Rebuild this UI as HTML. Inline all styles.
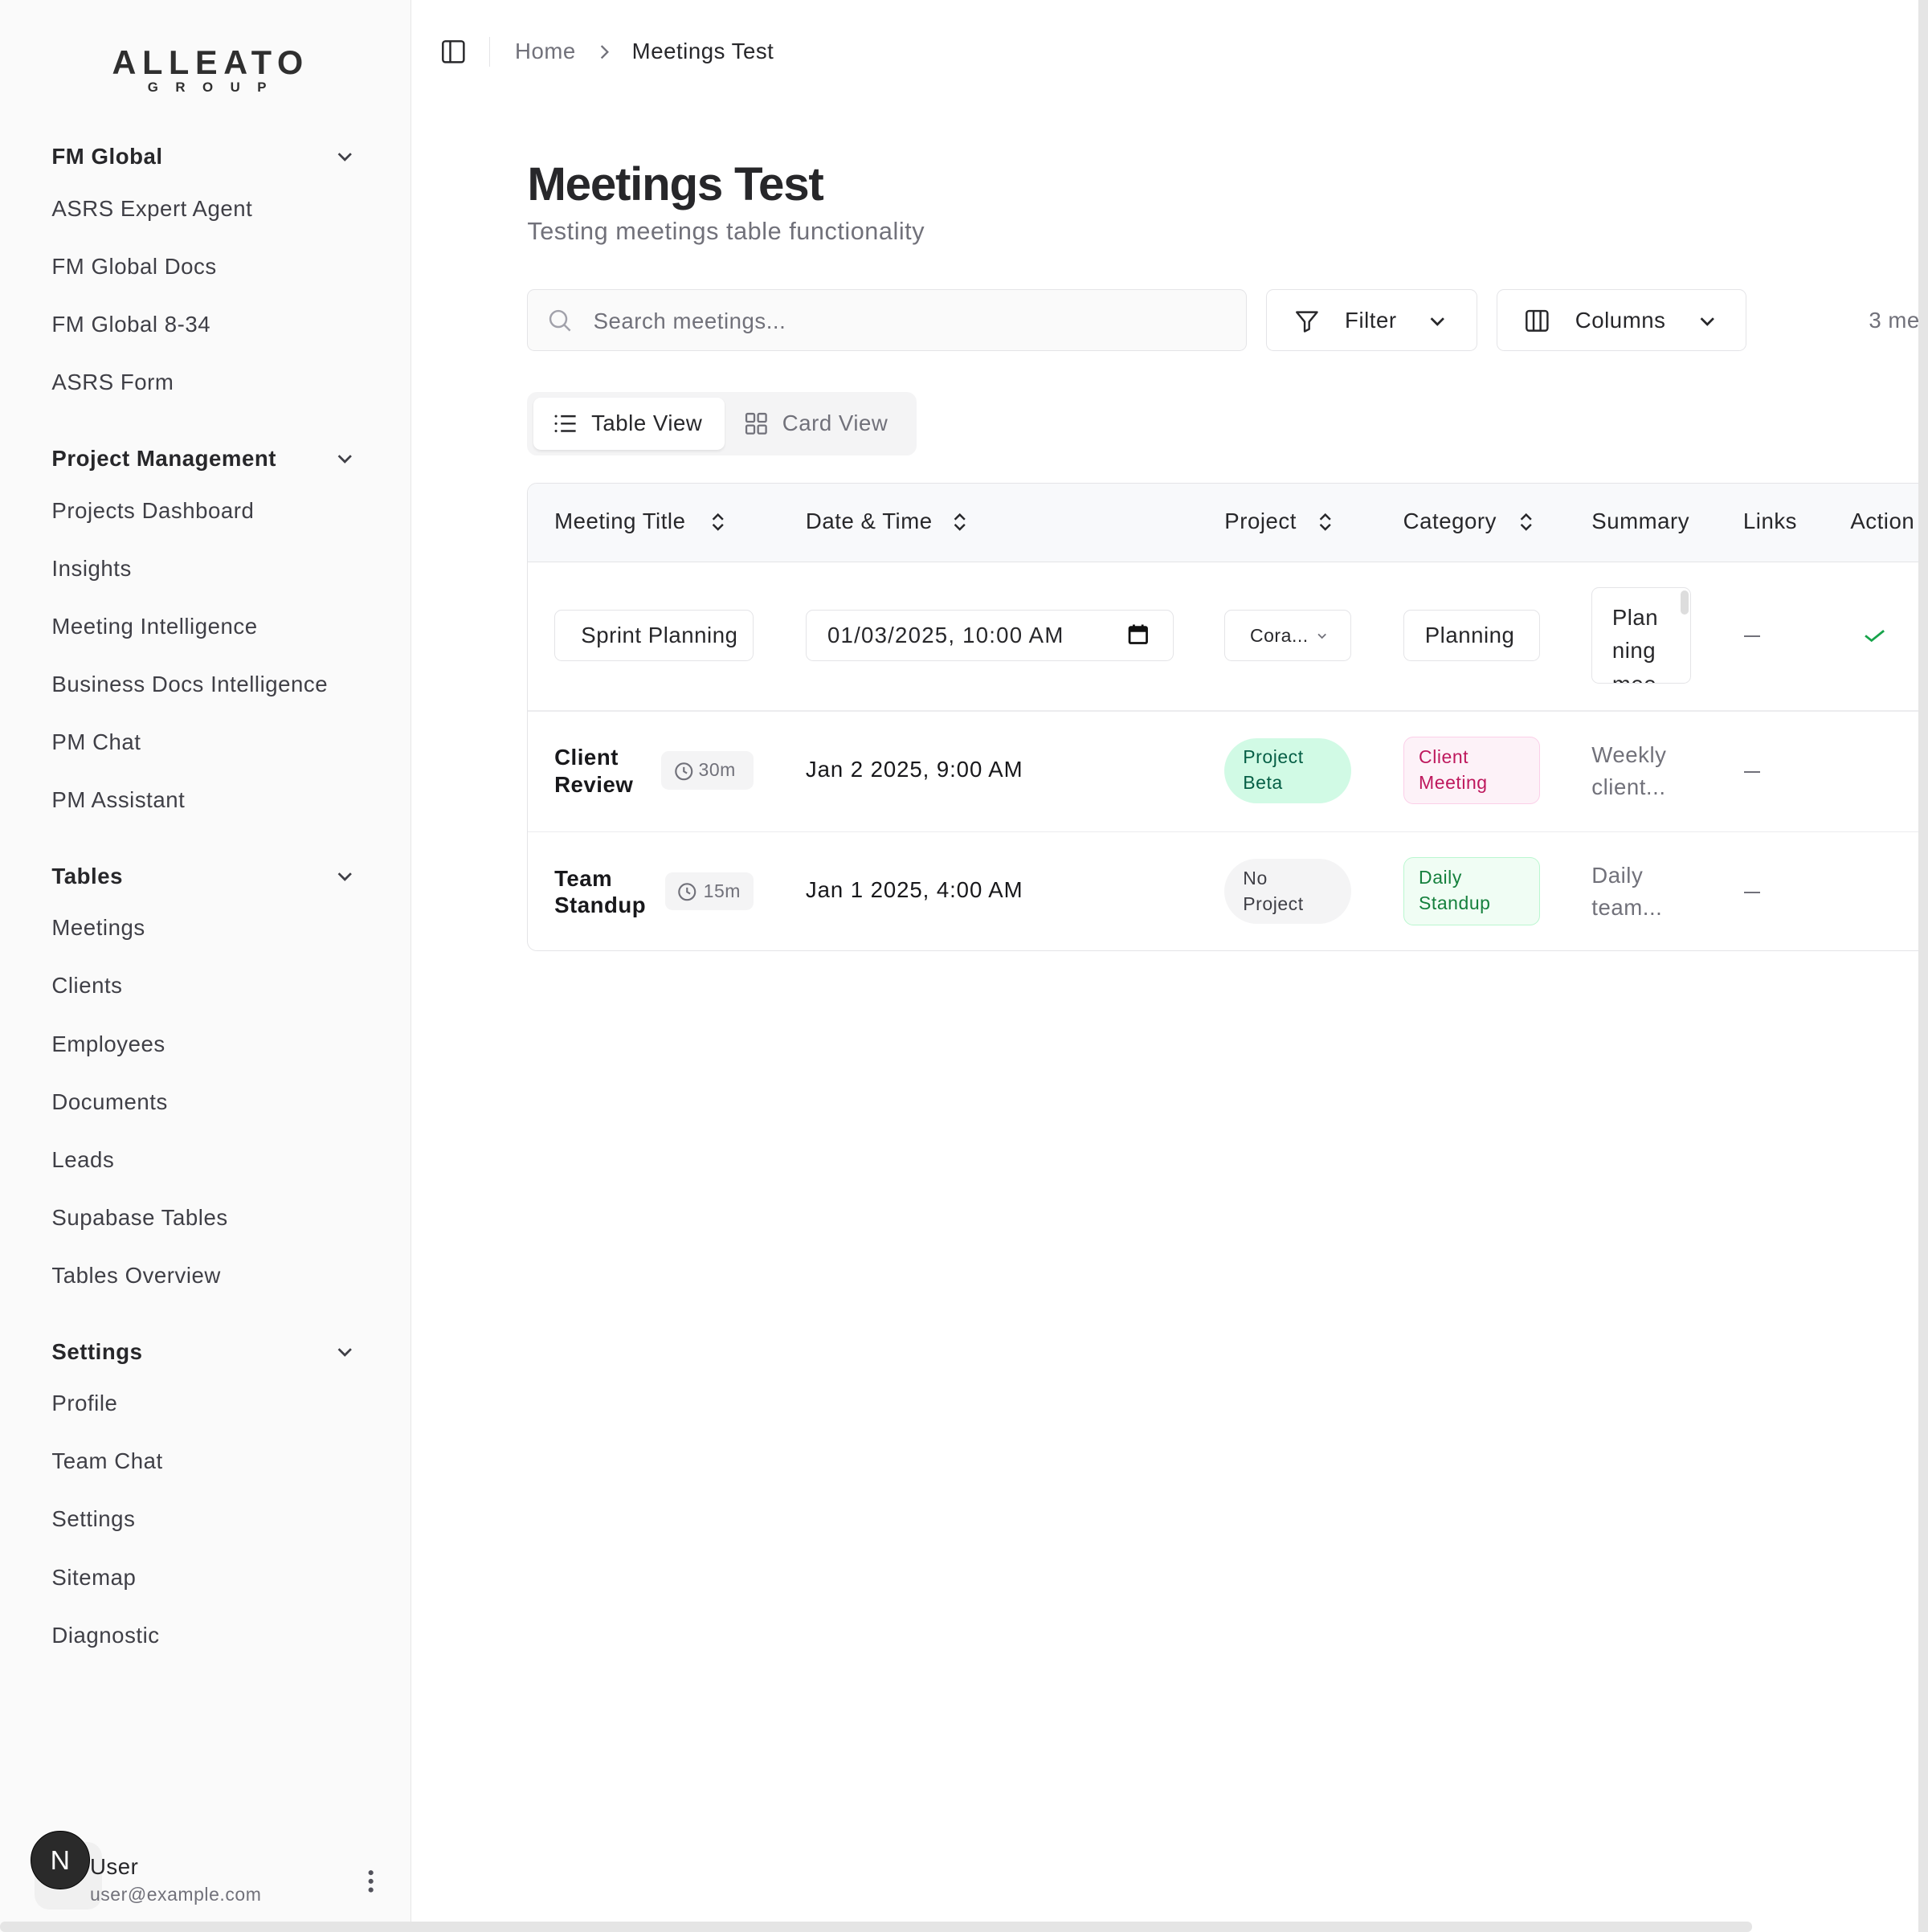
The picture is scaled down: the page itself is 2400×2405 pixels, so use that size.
<!DOCTYPE html>
<html><head><meta charset="utf-8"><style>
html{zoom:1.5335}
body{margin:0;width:1565px;height:1568px;overflow:hidden;position:relative;background:#fff;font-family:"Liberation Sans",sans-serif;color:#18181b;letter-spacing:0.35px}
.sb{position:absolute;left:0;top:0;width:333px;height:1568px;background:#fafafa;border-right:1px solid #e7e7e7}
.logo{position:absolute;left:86px;top:38px;width:164px;text-align:center}
.logo .a{font-size:27px;font-weight:bold;letter-spacing:5px;color:#2f2f2f;line-height:27px;margin-left:5px}
.logo .g{font-size:11px;font-weight:bold;letter-spacing:14px;color:#2f2f2f;margin-left:14px;line-height:12px}
.sec{position:absolute;left:42px;font-size:18px;font-weight:bold;color:#27272a}
.chev{position:absolute;left:272px}
.it{position:absolute;left:42px;font-size:18px;color:#3f3f46}
.abs{position:absolute}
.btn{position:absolute;border:1px solid #e4e4e7;border-radius:6px;background:#fff;height:50px;box-sizing:border-box;font-size:18px}
.th{position:absolute;top:413px;font-size:18px;color:#27272a}
.cell{position:absolute;font-size:18px}
.inp{position:absolute;border:1px solid #e4e4e7;border-radius:6px;height:42px;box-sizing:border-box;font-size:18px;color:#27272a;background:#fff}
.badge{position:absolute;border-radius:8px;font-size:15px;line-height:21px;padding:5px 12px;box-sizing:border-box}
</style></head><body>
<div class="sb">
 <div class="logo"><div class="a">ALLEATO</div><div class="g">GROUP</div></div>
 <div class="sec" style="top:117px">FM Global</div>
 <div class="it" style="top:159px">ASRS Expert Agent</div>
 <div class="it" style="top:206px">FM Global Docs</div>
 <div class="it" style="top:253px">FM Global 8-34</div>
 <div class="it" style="top:300px">ASRS Form</div>
 <div class="sec" style="top:362px">Project Management</div>
 <div class="it" style="top:404px">Projects Dashboard</div>
 <div class="it" style="top:451px">Insights</div>
 <div class="it" style="top:498px">Meeting Intelligence</div>
 <div class="it" style="top:545px">Business Docs Intelligence</div>
 <div class="it" style="top:592px">PM Chat</div>
 <div class="it" style="top:639px">PM Assistant</div>
 <div class="sec" style="top:701px">Tables</div>
 <div class="it" style="top:743px">Meetings</div>
 <div class="it" style="top:790px">Clients</div>
 <div class="it" style="top:837px">Employees</div>
 <div class="it" style="top:884px">Documents</div>
 <div class="it" style="top:931px">Leads</div>
 <div class="it" style="top:978px">Supabase Tables</div>
 <div class="it" style="top:1025px">Tables Overview</div>
 <div class="sec" style="top:1087px">Settings</div>
 <div class="it" style="top:1129px">Profile</div>
 <div class="it" style="top:1176px">Team Chat</div>
 <div class="it" style="top:1223px">Settings</div>
 <div class="it" style="top:1270px">Sitemap</div>
 <div class="it" style="top:1317px">Diagnostic</div>
 <svg class="chev" style="top:119px" width="16" height="16" viewBox="0 0 16 16"><path d="M3 6l5 5 5-5" fill="none" stroke="#3f3f46" stroke-width="1.8"/></svg>
 <svg class="chev" style="top:364px" width="16" height="16" viewBox="0 0 16 16"><path d="M3 6l5 5 5-5" fill="none" stroke="#3f3f46" stroke-width="1.8"/></svg>
 <svg class="chev" style="top:703px" width="16" height="16" viewBox="0 0 16 16"><path d="M3 6l5 5 5-5" fill="none" stroke="#3f3f46" stroke-width="1.8"/></svg>
 <svg class="chev" style="top:1089px" width="16" height="16" viewBox="0 0 16 16"><path d="M3 6l5 5 5-5" fill="none" stroke="#3f3f46" stroke-width="1.8"/></svg>
 <div class="abs" style="left:28px;top:1495px;width:55px;height:55px;border-radius:12px;background:#f0f0f0"></div>
 <div class="abs" style="left:25px;top:1486px;width:48px;height:48px;border-radius:50%;background:#2a2a2a;border:1px solid #000;color:#fff;font-size:22px;text-align:center;line-height:48px;box-sizing:border-box">N</div>
 <div class="abs" style="left:73px;top:1505px;font-size:18px;color:#27272a">User</div>
 <div class="abs" style="left:73px;top:1529px;font-size:15px;color:#71717a">user@example.com</div>
 <svg class="abs" style="left:296px;top:1516px" width="10" height="22"><circle cx="5" cy="4" r="2" fill="#52525b"/><circle cx="5" cy="11" r="2" fill="#52525b"/><circle cx="5" cy="18" r="2" fill="#52525b"/></svg>
</div>

<svg class="abs" style="left:358px;top:32px" width="20" height="20" viewBox="0 0 20 20"><rect x="1.5" y="1.5" width="17" height="17" rx="2" fill="none" stroke="#27272a" stroke-width="1.6"/><path d="M7.5 2v16" stroke="#27272a" stroke-width="1.6"/></svg>
<div class="abs" style="left:397px;top:30px;width:1px;height:24px;background:#e4e4e7"></div>
<div class="abs" style="left:418px;top:31px;font-size:18px;color:#71717a">Home</div>
<svg class="abs" style="left:483px;top:35px" width="14" height="14"><path d="M5 2l5 5-5 5" fill="none" stroke="#71717a" stroke-width="1.5"/></svg>
<div class="abs" style="left:513px;top:31px;font-size:18px;color:#27272a">Meetings Test</div>

<div class="abs" style="left:428px;top:128px;font-size:38px;font-weight:bold;color:#27272a;letter-spacing:-0.8px">Meetings Test</div>
<div class="abs" style="left:428px;top:177px;font-size:20px;color:#71717a">Testing meetings table functionality</div>

<div class="btn" style="left:428px;top:235px;width:584px;background:#fafafa">
 <svg class="abs" style="left:16px;top:15px" width="20" height="20"><circle cx="8.5" cy="8.5" r="6.5" fill="none" stroke="#a1a1aa" stroke-width="1.6"/><path d="M13.5 13.5l4.5 4.5" stroke="#a1a1aa" stroke-width="1.6"/></svg>
 <div class="abs" style="left:53px;top:15px;color:#71717a">Search meetings...</div></div>
<div class="btn" style="left:1028px;top:235px;width:171px">
 <svg class="abs" style="left:21px;top:14px" width="22" height="22" viewBox="0 0 24 24"><path d="M3 4h18l-7 8.5V19l-4 2v-8.5z" fill="none" stroke="#27272a" stroke-width="1.7" stroke-linejoin="round"/></svg>
 <div class="abs" style="left:63px;top:14px;color:#27272a">Filter</div>
 <svg class="abs" style="left:130px;top:17px" width="16" height="16"><path d="M3 6l5 5 5-5" fill="none" stroke="#27272a" stroke-width="1.8"/></svg></div>
<div class="btn" style="left:1215px;top:235px;width:203px">
 <svg class="abs" style="left:22px;top:15px" width="20" height="20"><rect x="1.5" y="2" width="17" height="16" rx="2" fill="none" stroke="#27272a" stroke-width="1.6"/><path d="M7.2 2v16M12.8 2v16" stroke="#27272a" stroke-width="1.6"/></svg>
 <div class="abs" style="left:63px;top:14px;color:#27272a">Columns</div>
 <svg class="abs" style="left:162px;top:17px" width="16" height="16"><path d="M3 6l5 5 5-5" fill="none" stroke="#27272a" stroke-width="1.8"/></svg></div>
<div class="abs" style="left:1517px;top:250px;font-size:18px;color:#71717a;white-space:nowrap">3 meetings</div>

<div class="abs" style="left:428px;top:318px;width:316px;height:52px;border-radius:8px;background:#f4f4f5"></div>
<div class="abs" style="left:433px;top:323px;width:155px;height:42px;border-radius:6px;background:#fff;box-shadow:0 1px 2px rgba(0,0,0,.08)"></div>
<svg class="abs" style="left:449px;top:334px" width="20" height="20"><path d="M6 4h12M6 10h12M6 16h12" stroke="#27272a" stroke-width="1.6"/><circle cx="2" cy="4" r="1" fill="#27272a"/><circle cx="2" cy="10" r="1" fill="#27272a"/><circle cx="2" cy="16" r="1" fill="#27272a"/></svg>
<div class="abs" style="left:480px;top:333px;font-size:18px;color:#27272a">Table View</div>
<svg class="abs" style="left:604px;top:334px" width="20" height="20"><rect x="2" y="2" width="6.5" height="6.5" rx="1" fill="none" stroke="#71717a" stroke-width="1.5"/><rect x="11.5" y="2" width="6.5" height="6.5" rx="1" fill="none" stroke="#71717a" stroke-width="1.5"/><rect x="2" y="11.5" width="6.5" height="6.5" rx="1" fill="none" stroke="#71717a" stroke-width="1.5"/><rect x="11.5" y="11.5" width="6.5" height="6.5" rx="1" fill="none" stroke="#71717a" stroke-width="1.5"/></svg>
<div class="abs" style="left:635px;top:333px;font-size:18px;color:#71717a">Card View</div>

<div class="abs" style="left:428px;top:392px;width:1140px;height:380px;border:1px solid #e4e4e7;border-radius:8px;box-sizing:border-box;overflow:hidden">
 <div style="height:63px;background:#f8f9fb;border-bottom:1px solid #e4e4e7"></div>
 <div class="abs" style="left:0;top:184px;width:100%;height:1px;background:#ececee"></div>
 <div class="abs" style="left:0;top:282px;width:100%;height:1px;background:#ececee"></div>
</div>
<div class="th" style="left:450px">Meeting Title</div>
<div class="th" style="left:654px">Date &amp; Time</div>
<div class="th" style="left:994px">Project</div>
<div class="th" style="left:1139px">Category</div>
<div class="th" style="left:1292px">Summary</div>
<div class="th" style="left:1415px">Links</div>
<div class="th" style="left:1502px">Action</div>
<svg class="abs" style="left:576px;top:415px" width="14" height="18"><path d="M3 7l4-4 4 4M3 11l4 4 4-4" fill="none" stroke="#27272a" stroke-width="1.6"/></svg>
<svg class="abs" style="left:772px;top:415px" width="14" height="18"><path d="M3 7l4-4 4 4M3 11l4 4 4-4" fill="none" stroke="#27272a" stroke-width="1.6"/></svg>
<svg class="abs" style="left:1069px;top:415px" width="14" height="18"><path d="M3 7l4-4 4 4M3 11l4 4 4-4" fill="none" stroke="#27272a" stroke-width="1.6"/></svg>
<svg class="abs" style="left:1232px;top:415px" width="14" height="18"><path d="M3 7l4-4 4 4M3 11l4 4 4-4" fill="none" stroke="#27272a" stroke-width="1.6"/></svg>

<div class="inp" style="left:450px;top:495px;width:162px;padding:10px 0 0 21px"><div style="width:126px;overflow:hidden;white-space:nowrap">Sprint Planning</div></div>
<div class="inp" style="left:654px;top:495px;width:299px;padding:10px 0 0 17px;letter-spacing:.8px">01/03/2025, 10:00 AM</div>
<svg class="abs" style="left:915px;top:506px" width="18" height="18"><rect x="2" y="3" width="14" height="13" rx="1" fill="none" stroke="#111" stroke-width="1.8"/><rect x="2" y="3" width="14" height="4" fill="#111"/><path d="M5.5 1v3M12.5 1v3" stroke="#111" stroke-width="1.8"/></svg>
<div class="inp" style="left:994px;top:495px;width:103px;font-size:15px;padding:12px 0 0 20px">Cora...</div>
<svg class="abs" style="left:1068px;top:511px" width="10" height="10"><path d="M2 3.5l3 3 3-3" fill="none" stroke="#71717a" stroke-width="1.2"/></svg>
<div class="inp" style="left:1139px;top:495px;width:111px;padding:10px 0 0 17px">Planning</div>
<div class="inp" style="left:1292px;top:477px;width:81px;height:78px;overflow:hidden;padding:10px 0 0 16px;line-height:27px">Plan<br>ning<br>mee</div>
<div class="abs" style="left:1364px;top:479px;width:7px;height:20px;border-radius:4px;background:#ddd"></div>
<div class="abs" style="left:1416px;top:516px;width:13px;height:1px;background:#71717a"></div>
<svg class="abs" style="left:1512px;top:508px" width="20" height="16"><path d="M2 8l5 4 10-8" fill="none" stroke="#16a34a" stroke-width="1.8"/></svg>

<div class="cell" style="left:450px;top:604px;font-weight:bold;line-height:22px">Client<br>Review</div>
<div class="abs" style="left:537px;top:610px;width:75px;height:31px;border-radius:6px;background:#f4f4f5;font-size:15px;color:#71717a;line-height:31px;padding-left:30px;box-sizing:border-box">30m</div>
<svg class="abs" style="left:547px;top:618px" width="16" height="16"><circle cx="8" cy="8" r="6.5" fill="none" stroke="#71717a" stroke-width="1.4"/><path d="M8 4.5V8l2.5 1.5" fill="none" stroke="#71717a" stroke-width="1.4"/></svg>
<div class="cell" style="left:654px;top:614px;font-weight:500;letter-spacing:0.6px">Jan 2 2025, 9:00 AM</div>
<div class="badge" style="left:994px;top:599px;width:103px;height:53px;border-radius:27px;background:#d1fae5;color:#065f46;padding:5px 15px">Project<br>Beta</div>
<div class="badge" style="left:1139px;top:598px;width:111px;height:55px;border:1px solid #fbcfe8;background:#fdf2f8;color:#be185d">Client<br>Meeting</div>
<div class="cell" style="left:1292px;top:600px;color:#71717a;line-height:26px">Weekly<br>client...</div>
<div class="abs" style="left:1416px;top:626px;width:13px;height:1px;background:#71717a"></div>

<div class="cell" style="left:450px;top:702px;font-weight:bold;line-height:22px">Team<br>Standup</div>
<div class="abs" style="left:540px;top:708px;width:72px;height:31px;border-radius:6px;background:#f4f4f5;font-size:15px;color:#71717a;line-height:31px;padding-left:31px;box-sizing:border-box">15m</div>
<svg class="abs" style="left:550px;top:716px" width="16" height="16"><circle cx="8" cy="8" r="6.5" fill="none" stroke="#71717a" stroke-width="1.4"/><path d="M8 4.5V8l2.5 1.5" fill="none" stroke="#71717a" stroke-width="1.4"/></svg>
<div class="cell" style="left:654px;top:712px;font-weight:500;letter-spacing:0.6px">Jan 1 2025, 4:00 AM</div>
<div class="badge" style="left:994px;top:697px;width:103px;height:53px;border-radius:27px;background:#f4f4f5;color:#3f3f46;padding:5px 15px">No<br>Project</div>
<div class="badge" style="left:1139px;top:696px;width:111px;height:55px;border:1px solid #bbf7d0;background:#f0fdf4;color:#15803d">Daily<br>Standup</div>
<div class="cell" style="left:1292px;top:698px;color:#71717a;line-height:26px">Daily<br>team...</div>
<div class="abs" style="left:1416px;top:724px;width:13px;height:1px;background:#71717a"></div>

<div class="abs" style="left:1557px;top:0;width:8px;height:1568px;background:#e5e5e5"></div>
<div class="abs" style="left:0;top:1560px;width:1422px;height:8px;border-radius:4px;background:#e5e5e5"></div>
</body></html>
